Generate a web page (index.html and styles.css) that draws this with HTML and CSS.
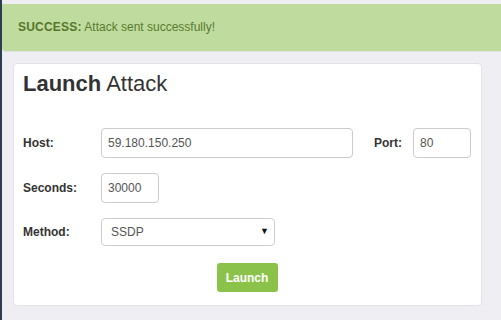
FILE: index.html
```html
<html>
<head>
<title>Launch Attack</title>
<link rel="stylesheet" href="styles.css">
</head>
<body>
<div class="sidebar"></div>
<div class="main">
  <div class="alert"><b>SUCCESS:</b> Attack sent successfully!</div>

  <div class="panel">
    <h2 class="title"><b>Launch</b> Attack</h2>
    <form class="form">
      <div class="row">
        <label class="label">Host:</label>
        <input class="input host" type="text" value="59.180.150.250">
        <label class="label port-label">Port:</label>
        <input class="input port" type="text" value="80">
      </div>
      <div class="row">
        <label class="label">Seconds:</label>
        <input class="input secs" type="text" value="30000">
      </div>
      <div class="row">
        <label class="label">Method:</label>
        <div class="select-wrap">
          <select class="select">
            <option>SSDP</option>
          </select>
          <span class="caret">&#9660;</span>
        </div>
      </div>
      <div class="actions">
        <button type="button" class="btn">Launch</button>
      </div>
    </form>
  </div>
</div>
</body>
</html>
```

FILE: styles.css
```css
body { margin:0; display:flex; min-height:320px; background:#eeeef3; font-family:"Liberation Sans", Arial, sans-serif; font-size:12px; color:#333; }
.sidebar { width:2px; background:#2c3e50; flex:none; }
.main { flex:1; padding-top:4px; }

.alert { background:#bfdc9e; color:#5a7a2e; padding:15px 16px; line-height:17px; border-radius:0 0 0 4px; box-shadow:0 1px 1px rgba(0,0,0,.06); }
.alert b { color:#56762a; letter-spacing:0.2px; }

.panel { margin:12px 19px 0 11px; background:#fff; border:1px solid #e2e2e7; border-radius:4px; padding:7px 10px 13px 9px; }
.title { margin:0; font-size:22px; font-weight:normal; line-height:26px; color:#333; }
.title b { font-weight:bold; }

.form { margin:31px 0 0 0; }
.row { display:flex; align-items:center; margin-bottom:15px; }
.label { width:78px; flex:none; font-weight:bold; color:#333; }
.port-label { width:auto; margin:0 11px 0 21px; }

.input { box-sizing:border-box; height:30px; border:1px solid #ccc; border-radius:4px; padding:0 6px; font-family:inherit; font-size:12px; color:#555; }
.host { width:252px; }
.port { width:58px; }
.secs { width:58px; }

.select-wrap { position:relative; width:174px; }
.select { -webkit-appearance:none; appearance:none; box-sizing:border-box; width:174px; height:28px; border:1px solid #ccc; border-radius:4px; background:#fff; padding:0 9px; font-family:inherit; font-size:12px; color:#555; }
.caret { position:absolute; right:6px; top:8px; font-size:9px; color:#111; pointer-events:none; }

.actions { display:flex; justify-content:center; padding-top:2px; }
.btn { height:29px; width:61px; border:none; border-radius:3px; background:#8bc34a; color:#fff; font-family:inherit; font-weight:bold; font-size:12px; }
```
